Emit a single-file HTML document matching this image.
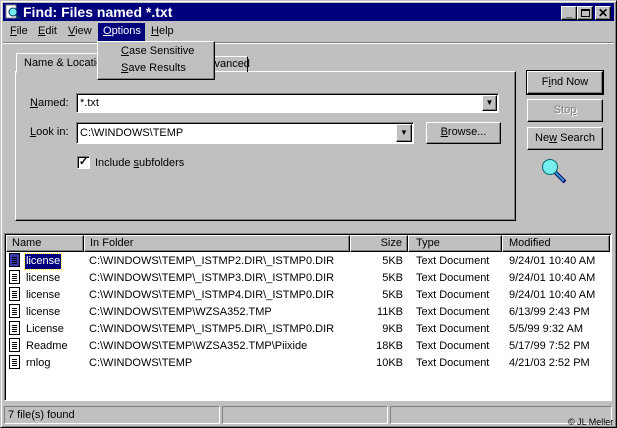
<!DOCTYPE html><html><head><style>
*{margin:0;padding:0;box-sizing:border-box}
body{width:617px;height:428px;background:#c0c0c0;font-family:"Liberation Sans",Arial,sans-serif;font-size:11px;color:#000;position:relative;overflow:hidden}
.a{position:absolute;white-space:nowrap}
.out{border:1px solid;border-color:#fff #000 #000 #fff;box-shadow:inset -1px -1px #808080}
.in{border:1px solid;border-color:#808080 #fff #fff #808080;box-shadow:inset 1px 1px #000}
.btn{position:absolute;background:#c0c0c0;text-align:center;line-height:19px;border:1px solid;border-color:#fff #000 #000 #fff;box-shadow:inset -1px -1px #808080}
u{text-decoration:underline}
.row{position:absolute;left:8px;height:17px;line-height:17px;width:600px}
.row span{position:absolute;top:1px}
.ico{position:absolute;left:1px;top:1px;width:11px;height:14px;border:1px solid #000;background:#fff}
.ico:after{content:"";position:absolute;left:2px;top:3px;width:5px;height:7px;background:repeating-linear-gradient(#000 0 1px,transparent 1px 2px)}
</style></head><body>
<div class="a" style="left:0;top:0;width:617px;height:428px;border:1px solid;border-color:#c0c0c0 #000 #000 #c0c0c0;box-shadow:inset 1px 1px #fff,inset -1px -1px #808080"></div>
<div class="a" style="left:3px;top:3px;width:611px;height:18px;background:#00007c"></div>
<svg class="a" style="left:5px;top:4px" width="16" height="16"><rect x="1" y="1" width="10" height="13" fill="#fff" stroke="#888"/><circle cx="8" cy="8" r="4" fill="#7ee" stroke="#036"/><line x1="11" y1="11" x2="15" y2="15" stroke="#036" stroke-width="2"/></svg>
<div class="a" style="left:23px;top:4px;color:#fff;font-weight:bold;font-size:14px;line-height:16px">Find: Files named *.txt</div>
<div class="btn" style="left:561px;top:6px;width:16px;height:14px;line-height:12px;font-weight:bold">_</div>
<div class="btn" style="left:577px;top:6px;width:16px;height:14px"><div class="a" style="left:3px;top:2px;width:9px;height:8px;border:1px solid #000;border-top-width:2px"></div></div>
<div class="btn" style="left:595px;top:6px;width:16px;height:14px;line-height:12px;font-weight:bold;font-size:12px">✕</div>
<div class="a" style="left:10px;top:25px"><u>F</u>ile</div>
<div class="a" style="left:38px;top:25px"><u>E</u>dit</div>
<div class="a" style="left:68px;top:25px"><u>V</u>iew</div>
<div class="a" style="left:98px;top:23px;width:47px;height:18px;background:#00007c;color:#fff;padding:2px 0 0 5px"><u>O</u>ptions</div>
<div class="a" style="left:151px;top:25px"><u>H</u>elp</div>
<div class="a" style="left:3px;top:42px;width:611px;height:2px;border-top:1px solid #808080;border-bottom:1px solid #fff"></div>
<div class="a out" style="left:15px;top:71px;width:501px;height:150px"></div>
<div class="a" style="left:16px;top:53px;width:100px;height:20px;background:#c0c0c0;border:1px solid;border-color:#fff #000 transparent #fff;padding:3px 0 0 7px">Name &amp; Location</div>
<div class="a" style="left:195px;top:56px;width:53px;height:16px;border-right:1px solid #000;border-top:1px solid #fff;padding:1px 0 0 6px">Advanced</div>
<div class="a out" style="left:97px;top:41px;width:118px;height:39px;background:#c0c0c0"></div>
<div class="a" style="left:121px;top:45px"><u>C</u>ase Sensitive</div>
<div class="a" style="left:121px;top:62px"><u>S</u>ave Results</div>
<div class="a" style="left:30px;top:97px"><u>N</u>amed:</div>
<div class="a in" style="left:76px;top:93px;width:423px;height:20px;background:#fff;padding:3px 3px">*.txt</div>
<div class="btn" style="left:482px;top:95px;width:15px;height:16px;line-height:14px;font-size:8px">▼</div>
<div class="a" style="left:30px;top:126px"><u>L</u>ook in:</div>
<div class="a in" style="left:76px;top:122px;width:338px;height:22px;background:#fff;padding:4px 3px">C:\WINDOWS\TEMP</div>
<div class="btn" style="left:396px;top:124px;width:16px;height:18px;line-height:16px;font-size:8px">▼</div>
<div class="btn" style="left:426px;top:122px;width:75px;height:22px"><u>B</u>rowse...</div>
<div class="a in" style="left:77px;top:156px;width:13px;height:13px;background:#fff;font-size:11px;line-height:11px;text-align:center;font-weight:bold">✓</div>
<div class="a" style="left:95px;top:157px">Include <u>s</u>ubfolders</div>
<div class="btn" style="left:527px;top:71px;width:76px;height:23px;outline:1px solid #000;line-height:21px">F<u>i</u>nd Now</div>
<div class="btn" style="left:527px;top:99px;width:76px;height:23px;color:#808080;line-height:21px;text-shadow:1px 1px #fff">Sto<u>p</u></div>
<div class="btn" style="left:527px;top:127px;width:76px;height:23px;line-height:21px">Ne<u>w</u> Search</div>
<svg class="a" style="left:541px;top:158px" width="28" height="28"><line x1="14" y1="14" x2="24" y2="24" stroke="#006" stroke-width="4"/><line x1="14" y1="14" x2="23" y2="23" stroke="#39c" stroke-width="2"/><circle cx="9" cy="9" r="7.5" fill="#7ee" stroke="#066"/></svg>
<div class="a in" style="left:4px;top:233px;width:608px;height:168px;background:#fff"></div>
<div class="a" style="left:6px;top:235px;width:604px;height:17px;background:#c0c0c0"></div>
<div class="a out" style="left:6px;top:235px;width:78px;height:17px;padding:1px 5px">Name</div>
<div class="a out" style="left:84px;top:235px;width:266px;height:17px;padding:1px 5px">In Folder</div>
<div class="a out" style="left:350px;top:235px;width:58px;height:17px;padding:1px 5px;text-align:right">Size</div>
<div class="a out" style="left:408px;top:235px;width:94px;height:17px;padding:1px 7px">Type</div>
<div class="a out" style="left:502px;top:235px;width:108px;height:17px;padding:1px 6px">Modified</div>
<div class="row" style="top:252px"><div class="ico" style="background:#3a3ab0"></div><span style="left:17px;top:2px;line-height:15px;padding:0 1px;background:#00007c;color:#fff;outline:1px dotted #ff0">license</span><span style="left:81px">C:\WINDOWS\TEMP\_ISTMP2.DIR\_ISTMP0.DIR</span><span style="left:350px;width:45px;text-align:right">5KB</span><span style="left:408px">Text Document</span><span style="left:501px">9/24/01 10:40 AM</span></div>
<div class="row" style="top:269px"><div class="ico"></div><span style="left:18px">license</span><span style="left:81px">C:\WINDOWS\TEMP\_ISTMP3.DIR\_ISTMP0.DIR</span><span style="left:350px;width:45px;text-align:right">5KB</span><span style="left:408px">Text Document</span><span style="left:501px">9/24/01 10:40 AM</span></div>
<div class="row" style="top:286px"><div class="ico"></div><span style="left:18px">license</span><span style="left:81px">C:\WINDOWS\TEMP\_ISTMP4.DIR\_ISTMP0.DIR</span><span style="left:350px;width:45px;text-align:right">5KB</span><span style="left:408px">Text Document</span><span style="left:501px">9/24/01 10:40 AM</span></div>
<div class="row" style="top:303px"><div class="ico"></div><span style="left:18px">license</span><span style="left:81px">C:\WINDOWS\TEMP\WZSA352.TMP</span><span style="left:350px;width:45px;text-align:right">11KB</span><span style="left:408px">Text Document</span><span style="left:501px">6/13/99 2:43 PM</span></div>
<div class="row" style="top:320px"><div class="ico"></div><span style="left:18px">License</span><span style="left:81px">C:\WINDOWS\TEMP\_ISTMP5.DIR\_ISTMP0.DIR</span><span style="left:350px;width:45px;text-align:right">9KB</span><span style="left:408px">Text Document</span><span style="left:501px">5/5/99 9:32 AM</span></div>
<div class="row" style="top:337px"><div class="ico"></div><span style="left:18px">Readme</span><span style="left:81px">C:\WINDOWS\TEMP\WZSA352.TMP\Piixide</span><span style="left:350px;width:45px;text-align:right">18KB</span><span style="left:408px">Text Document</span><span style="left:501px">5/17/99 7:52 PM</span></div>
<div class="row" style="top:354px"><div class="ico"></div><span style="left:18px">rnlog</span><span style="left:81px">C:\WINDOWS\TEMP</span><span style="left:350px;width:45px;text-align:right">10KB</span><span style="left:408px">Text Document</span><span style="left:501px">4/21/03 2:52 PM</span></div>
<div class="a in" style="left:4px;top:406px;width:216px;height:18px;box-shadow:none;padding:2px 3px">7 file(s) found</div>
<div class="a in" style="left:222px;top:406px;width:166px;height:18px;box-shadow:none"></div>
<div class="a in" style="left:390px;top:406px;width:222px;height:18px;box-shadow:none"></div>
<div class="a" style="left:568px;top:417px;font-size:9px;line-height:10px">© JL Meller</div>
</body></html>
